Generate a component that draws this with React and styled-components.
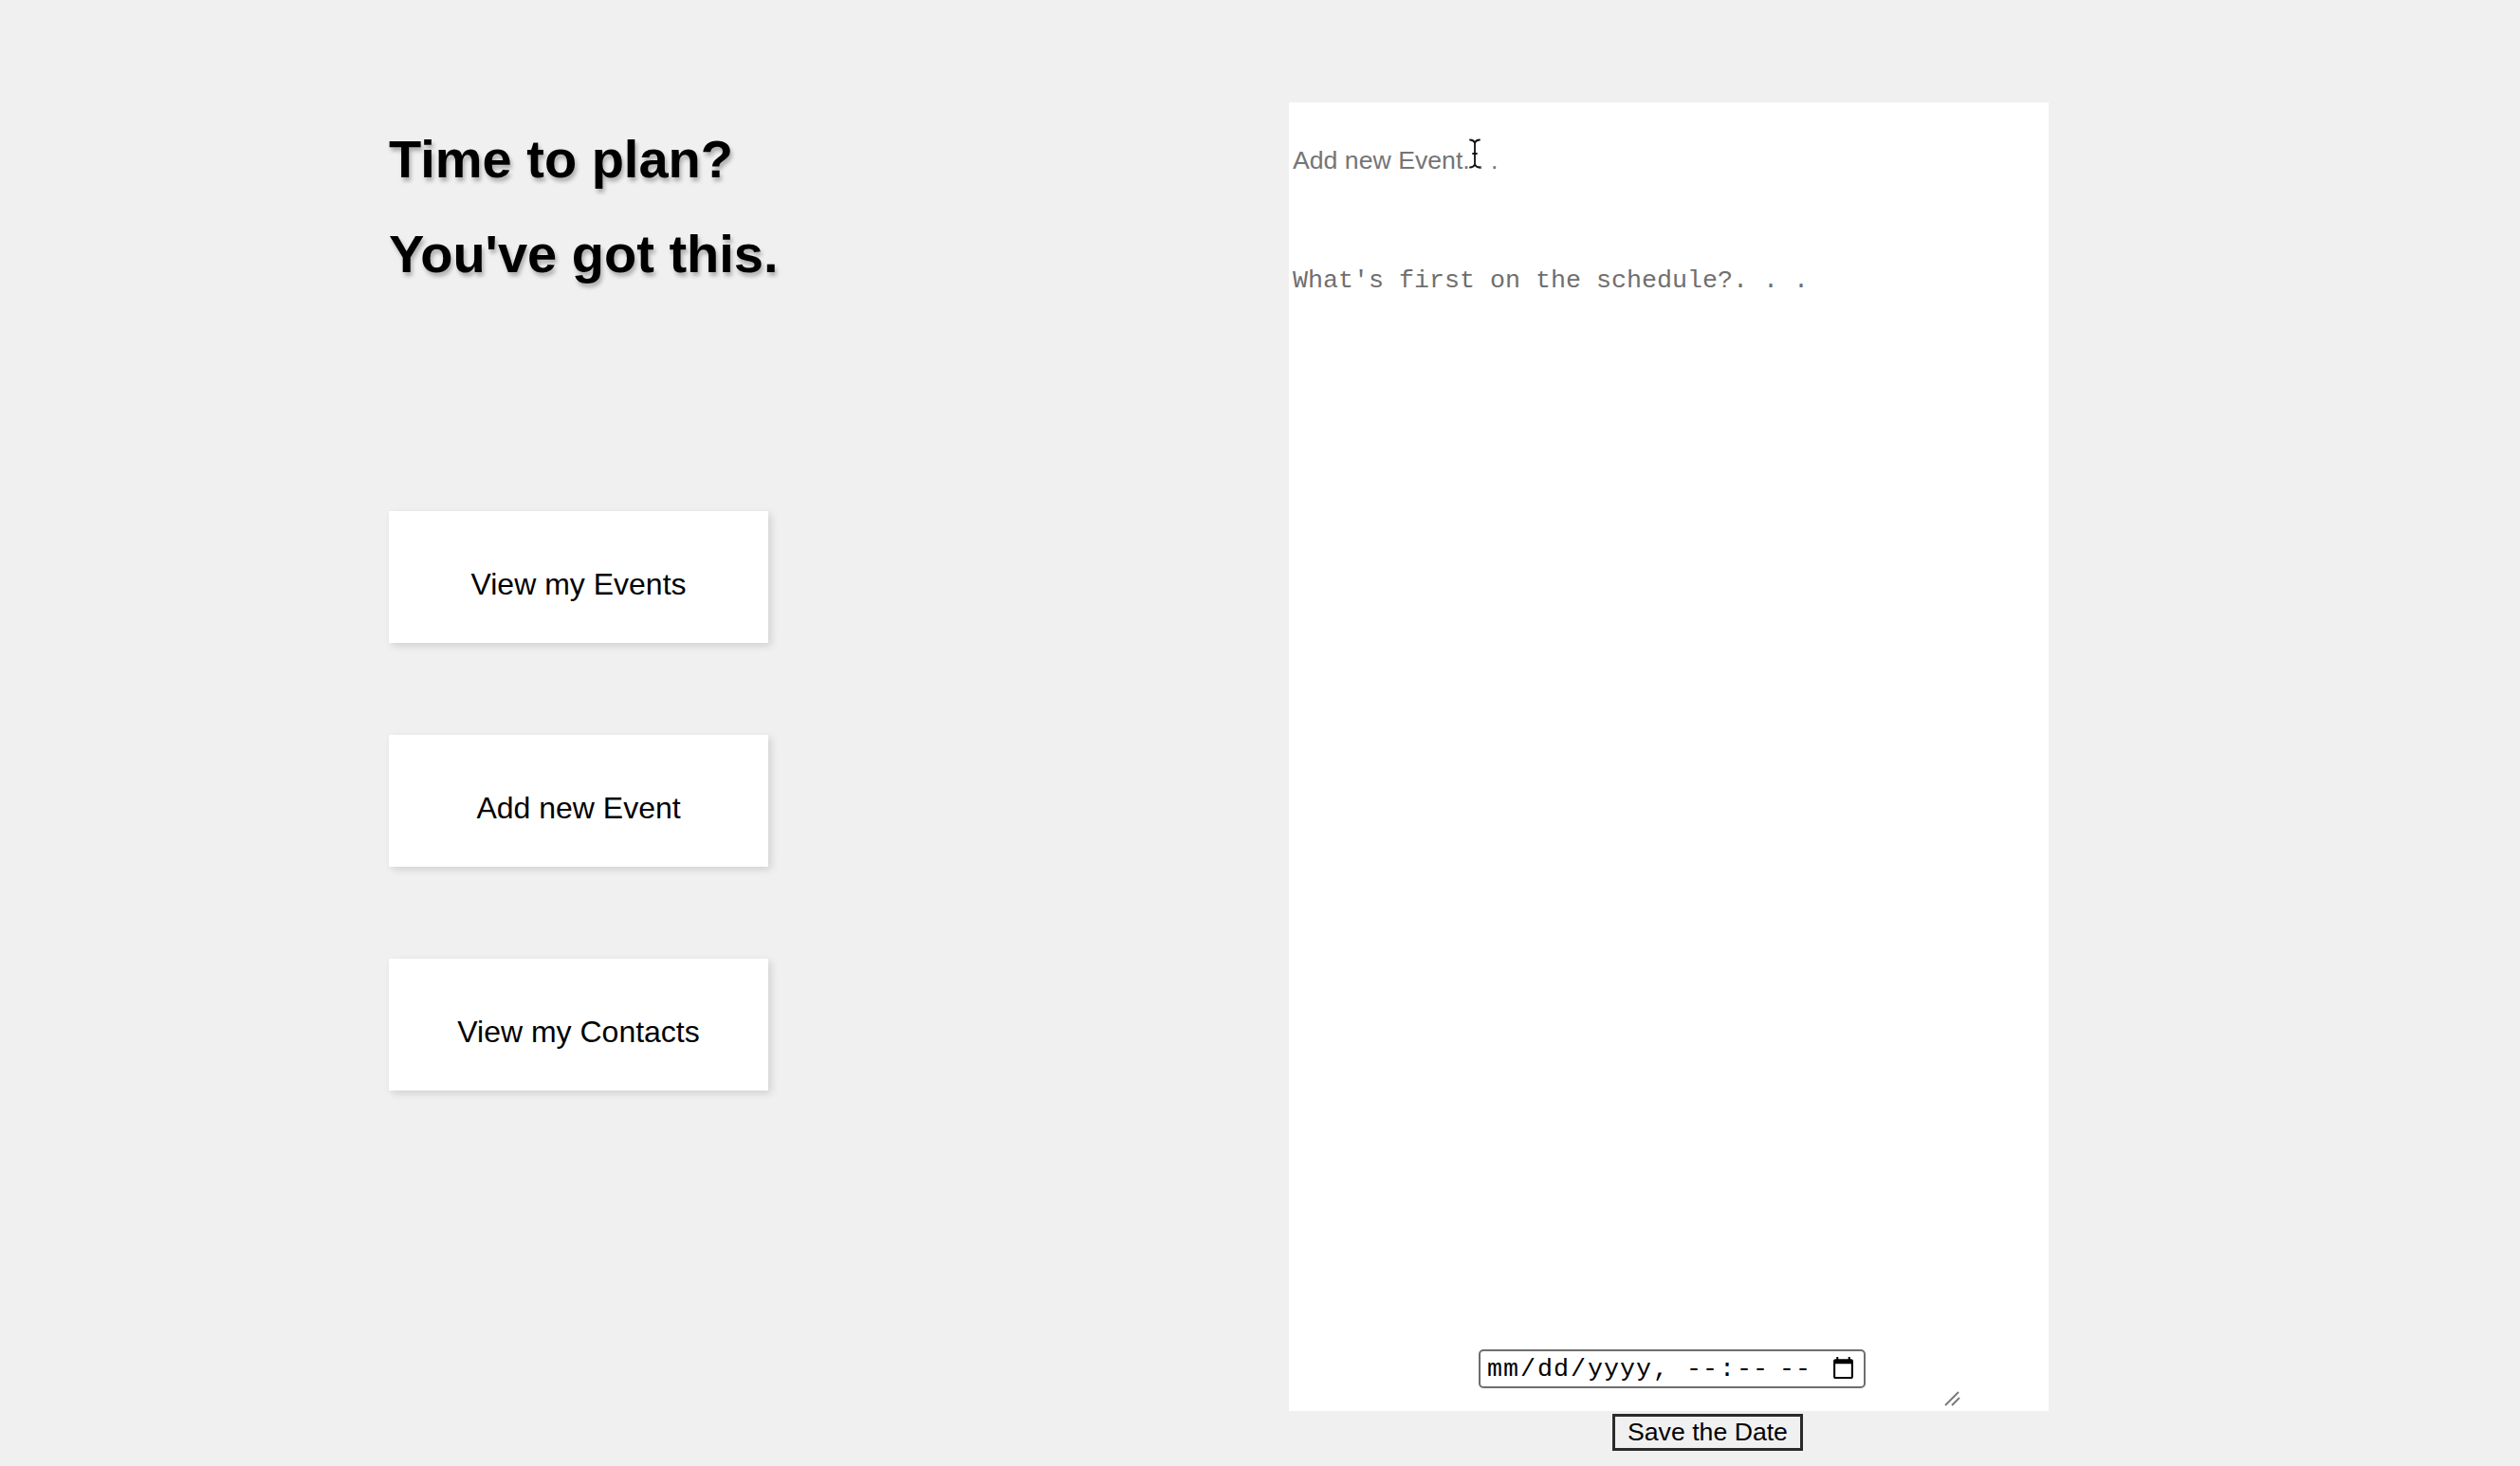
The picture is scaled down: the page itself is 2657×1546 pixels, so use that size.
import React from 'react'
import styled, { createGlobalStyle } from 'styled-components'

const GlobalStyle = createGlobalStyle`
  html, body {
    margin: 0;
    padding: 0;
    background: #f0f0f0;
  }
  body {
    font-family: "Liberation Sans", Arial, sans-serif;
    color: #000;
  }
`

const Page = styled.div`
  display: flex;
  align-items: flex-start;
  min-height: 1546px;
  box-sizing: border-box;
  padding: 108px 0 0 410px;
`

const LeftColumn = styled.div`
  width: 949px;
  display: flex;
  flex-direction: column;
  align-items: flex-start;
`

const Heading = styled.h1`
  margin: 10px 0 0;
  font-size: 56px;
  font-weight: 700;
  line-height: 100px;
  text-shadow: 2px 4px 4px rgba(0, 0, 0, 0.28);

  span {
    display: block;
  }
`

const NavList = styled.nav`
  display: flex;
  flex-direction: column;
  gap: 97px;
  margin-top: 221px;
`

const NavButton = styled.button`
  width: 400px;
  height: 139px;
  box-sizing: border-box;
  padding: 16px 0 0;
  border: none;
  background: #fff;
  box-shadow: 3px 3px 8px rgba(0, 0, 0, 0.13);
  font-family: "Liberation Sans", Arial, sans-serif;
  font-size: 32px;
  color: #000;
  display: flex;
  align-items: center;
  justify-content: center;
  cursor: pointer;
`

const RightColumn = styled.div`
  display: flex;
  flex-direction: column;
  align-items: flex-start;
`

const Panel = styled.form`
  position: relative;
  width: 801px;
  height: 1380px;
  background: #fff;
  display: flex;
  flex-direction: column;
`

const TitleInput = styled.input`
  margin-top: 42px;
  padding: 4px;
  border: none;
  outline: none;
  background: transparent;
  font-family: "Liberation Sans", Arial, sans-serif;
  font-size: 26.67px;
  line-height: normal;
  color: #000;

  &::placeholder {
    color: #757575;
  }
`

const NotesArea = styled.textarea`
  flex: 1;
  margin-top: 88px;
  padding: 4px;
  border: none;
  outline: none;
  resize: none;
  background: transparent;
  font-family: "Liberation Mono", "Courier New", monospace;
  font-size: 26.67px;
  color: #000;

  &::placeholder {
    color: #6f6f6f;
  }
`

const Footer = styled.div`
  height: 65px;
  display: flex;
  align-items: flex-start;
  padding-left: 200px;
`

const DateInput = styled.input`
  width: 408px;
  height: 41px;
  box-sizing: border-box;
  padding: 0 6px;
  border: 2px solid #6e6e6e;
  border-radius: 5px;
  background: #fff;
  font-family: "Liberation Mono", "Courier New", monospace;
  font-size: 26.67px;
  letter-spacing: 1px;
  color: #000;
`

const Grip = styled.svg`
  margin-left: auto;
  margin-right: 92px;
  align-self: flex-end;
  margin-bottom: 5px;
`

const Cursor = styled.svg`
  position: absolute;
  left: 189px;
  top: 38px;
  pointer-events: none;
`

const SaveButton = styled.button`
  margin: 3px 0 0 341px;
  height: 39px;
  box-sizing: border-box;
  padding: 0 13px;
  border: 3px solid #2a2a2a;
  border-radius: 0;
  background: #f0f0f0;
  font-family: "Liberation Sans", Arial, sans-serif;
  font-size: 26.67px;
  line-height: 1;
  color: #000;
  cursor: pointer;
`

const navItems = ['View my Events', 'Add new Event', 'View my Contacts']

const App = () => {
  return (
    <>
      <GlobalStyle />
      <Page>
        <LeftColumn>
          <Heading>
            <span>Time to plan?</span>
            <span>You've got this.</span>
          </Heading>

          <NavList>
            {navItems.map(label => (
              <NavButton key={label} type='button'>{label}</NavButton>
            ))}
          </NavList>
        </LeftColumn>

        <RightColumn>
          <Panel onSubmit={e => e.preventDefault()}>
            <TitleInput type='text' placeholder='Add new Event. . .' />
            <NotesArea placeholder={"What's first on the schedule?. . ."} />

            <Footer>
              <DateInput type='datetime-local' />
              <Grip width='18' height='16' viewBox='0 0 18 16'>
                <line x1='1' y1='15' x2='15' y2='1' stroke='#7a7a7a' strokeWidth='2' />
                <line x1='8' y1='15' x2='16' y2='7' stroke='#7a7a7a' strokeWidth='2' />
              </Grip>
            </Footer>

            {/* mouse cursor caught in the screenshot */}
            <Cursor width='14' height='32' viewBox='0 0 14 32'>
              <path
                d='M2 1.5 Q5.5 1.5 7 4.5 Q8.5 1.5 12 1.5 M7 4.5 V27.5 M2 30.5 Q5.5 30.5 7 27.5 Q8.5 30.5 12 30.5 M5 16 H9'
                fill='none'
                stroke='#111'
                strokeWidth='1.8'
                strokeLinecap='round'
              />
            </Cursor>
          </Panel>

          <SaveButton type='button'>Save the Date</SaveButton>
        </RightColumn>
      </Page>
    </>
  )
}

export default App
